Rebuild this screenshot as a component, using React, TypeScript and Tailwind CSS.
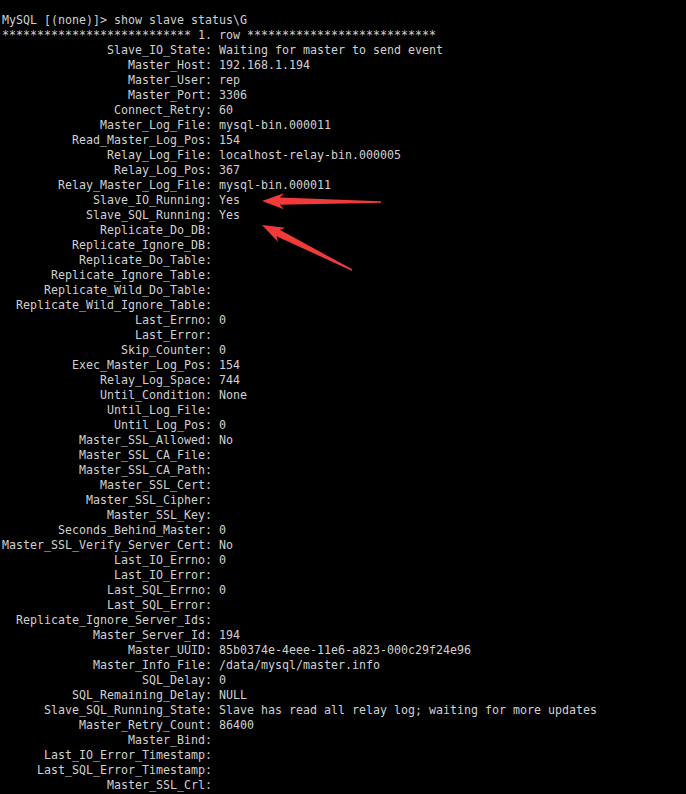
const rows: [string, string][] = [
	["Slave_IO_State", "Waiting for master to send event"],
	["Master_Host", "192.168.1.194"],
	["Master_User", "rep"],
	["Master_Port", "3306"],
	["Connect_Retry", "60"],
	["Master_Log_File", "mysql-bin.000011"],
	["Read_Master_Log_Pos", "154"],
	["Relay_Log_File", "localhost-relay-bin.000005"],
	["Relay_Log_Pos", "367"],
	["Relay_Master_Log_File", "mysql-bin.000011"],
	["Slave_IO_Running", "Yes"],
	["Slave_SQL_Running", "Yes"],
	["Replicate_Do_DB", ""],
	["Replicate_Ignore_DB", ""],
	["Replicate_Do_Table", ""],
	["Replicate_Ignore_Table", ""],
	["Replicate_Wild_Do_Table", ""],
	["Replicate_Wild_Ignore_Table", ""],
	["Last_Errno", "0"],
	["Last_Error", ""],
	["Skip_Counter", "0"],
	["Exec_Master_Log_Pos", "154"],
	["Relay_Log_Space", "744"],
	["Until_Condition", "None"],
	["Until_Log_File", ""],
	["Until_Log_Pos", "0"],
	["Master_SSL_Allowed", "No"],
	["Master_SSL_CA_File", ""],
	["Master_SSL_CA_Path", ""],
	["Master_SSL_Cert", ""],
	["Master_SSL_Cipher", ""],
	["Master_SSL_Key", ""],
	["Seconds_Behind_Master", "0"],
	["Master_SSL_Verify_Server_Cert", "No"],
	["Last_IO_Errno", "0"],
	["Last_IO_Error", ""],
	["Last_SQL_Errno", "0"],
	["Last_SQL_Error", ""],
	["Replicate_Ignore_Server_Ids", ""],
	["Master_Server_Id", "194"],
	["Master_UUID", "85b0374e-4eee-11e6-a823-000c29f24e96"],
	["Master_Info_File", "/data/mysql/master.info"],
	["SQL_Delay", "0"],
	["SQL_Remaining_Delay", "NULL"],
	["Slave_SQL_Running_State", "Slave has read all relay log; waiting for more updates"],
	["Master_Retry_Count", "86400"],
	["Master_Bind", ""],
	["Last_IO_Error_Timestamp", ""],
	["Last_SQL_Error_Timestamp", ""],
	["Master_SSL_Crl", ""],
];

// tapered arrow like the ones from a screenshot markup tool
function arrowPoints(tip: [number, number], tail: [number, number]): string {
	const dx = tail[0] - tip[0];
	const dy = tail[1] - tip[1];
	const len = Math.hypot(dx, dy);
	const ux = dx / len;
	const uy = dy / len;
	const nx = -uy;
	const ny = ux;
	const at = (d: number, w: number) =>
		`${tip[0] + ux * d + nx * w},${tip[1] + uy * d + ny * w}`;
	return [
		at(0, 0),
		at(22, 8),
		at(18, 3.6),
		at(len, 0.7),
		at(len, -0.7),
		at(18, -3.6),
		at(22, -8),
	].join(" ");
}

export default function App() {
	const lines = [
		"MySQL [(none)]> show slave status\\G",
		"*************************** 1. row ***************************",
		...rows.map(([k, v]) => `${k.padStart(29)}: ${v}`),
	];

	return (
		<div className="relative w-[686px] h-[794px] overflow-hidden bg-black">
			<pre className="pt-[13px] pl-[2px] font-['DejaVu_Sans_Mono',monospace] text-[11.63px] leading-[15px] text-[#d0d0d0] whitespace-pre">
				{lines.join("\n")}
			</pre>

			{/* red arrows pointing at Slave_IO_Running / Slave_SQL_Running */}
			<svg className="absolute left-0 top-0" width="686" height="794">
				<polygon points={arrowPoints([262, 201], [381, 202])} fill="#f23a3a" />
				<polygon points={arrowPoints([262, 225], [352, 270])} fill="#f23a3a" />
			</svg>
		</div>
	);
}
